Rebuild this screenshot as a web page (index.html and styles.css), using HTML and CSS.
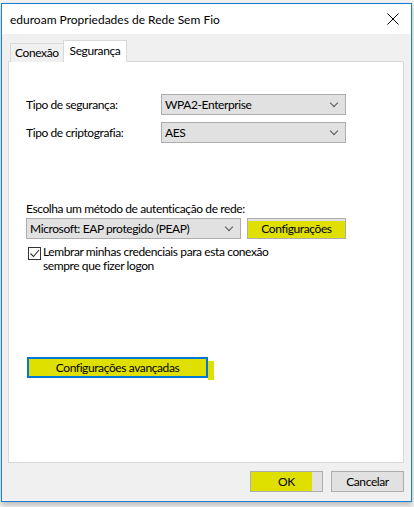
FILE: index.html
```html
<!DOCTYPE html>
<html lang="pt">
<head>
    <meta charset="UTF-8">
    <title>eduroam Propriedades de Rede Sem Fio</title>
    <link rel="stylesheet" href="styles.css">
</head>
<body>
    <div class="window">
        <div class="titlebar">
            <span class="title">eduroam Propriedades de Rede Sem Fio</span>
            <svg class="close" width="12" height="12" viewBox="0 0 12 12">
                <path d="M0.5 0.5 L11.5 11.5 M11.5 0.5 L0.5 11.5" stroke="#000" stroke-width="1" fill="none"/>
            </svg>
        </div>
        <div class="content">
            <div class="tabs">
                <div class="tab">Conexão</div>
                <div class="tab active">Segurança</div>
            </div>
            <div class="panel">
                <div class="row first">
                    <span class="label">Tipo de segurança:</span>
                    <div class="select wide">WPA2-Enterprise<span class="chev"></span></div>
                </div>
                <div class="row">
                    <span class="label">Tipo de criptografia:</span>
                    <div class="select wide">AES<span class="chev"></span></div>
                </div>

                <div class="caption">Escolha um método de autenticação de rede:</div>
                <div class="auth-row">
                    <div class="select eap">Microsoft: EAP protegido (PEAP)<span class="chev"></span></div>
                    <div class="button settings marked">Configurações</div>
                </div>
                <div class="check-row">
                    <span class="checkbox">
                        <svg width="11" height="11" viewBox="0 0 11 11">
                            <path d="M1.5 5.5 L4.5 8.5 L10 2" stroke="#333" stroke-width="1.1" fill="none"/>
                        </svg>
                    </span>
                    <span class="check-text">Lembrar minhas credenciais para esta conexão<br>sempre que fizer logon</span>
                </div>

                <div class="button advanced">Configurações avançadas</div>
            </div>
            <div class="footer">
                <div class="button ok">OK</div>
                <div class="button">Cancelar</div>
            </div>
        </div>
    </div>
</body>
</html>
```

FILE: styles.css
```css
body {
    margin: 0;
    background-color: #f3f3f3;
    font-family: "Segoe UI", Lato, "Noto Sans", sans-serif;
    font-size: 12px;
    letter-spacing: -0.4px;
    color: #000;
    width: 414px;
    height: 507px;
    overflow: hidden;
}
.window {
    margin: 3px 0 0 1px;
    width: 409px;
    height: 497px;
    border: 1px solid #1a7fd4;
    background-color: #f0f0f0;
    box-shadow: 0 3px 6px rgba(0, 0, 0, 0.25);
    display: flex;
    flex-direction: column;
}
.titlebar {
    height: 30px;
    background-color: #fff;
    display: flex;
    align-items: center;
    justify-content: space-between;
    padding: 0 10px 0 8px;
}
.title {
    font-size: 12px;
    letter-spacing: 0;
}
.close {
    margin-right: 2px;
}
.content {
    flex: 1;
    padding: 7px 7px 0 6px;
    display: flex;
    flex-direction: column;
}
.tabs {
    display: flex;
    align-items: flex-end;
    height: 21px;
    padding-left: 2px;
    position: relative;
    z-index: 1;
}
.tab {
    height: 18px;
    line-height: 18px;
    padding: 0 4px;
    border: 1px solid #d9d9d9;
    border-bottom: none;
    background-color: #f0f0f0;
}
.tab.active {
    height: 21px;
    line-height: 19px;
    background-color: #fff;
    padding: 0 6px;
    margin-left: -1px;
}
.panel {
    height: 400px;
    margin-top: -1px;
    border: 1px solid #d9d9d9;
    background-color: #fff;
    padding: 0 0 0 17px;
    display: flex;
    flex-direction: column;
    align-items: flex-start;
}
.row {
    display: flex;
    align-items: center;
    margin-top: 7px;
}
.row.first {
    margin-top: 32px;
}
.label {
    width: 135px;
}
.select {
    position: relative;
    box-sizing: border-box;
    height: 21px;
    line-height: 19px;
    border: 1px solid #adadad;
    background-color: #e1e1e1;
    padding-left: 3px;
}
.select.wide {
    width: 185px;
}
.select.eap {
    width: 215px;
}
.chev {
    position: absolute;
    right: 8px;
    top: 5px;
    width: 5px;
    height: 5px;
    border-right: 1px solid #555;
    border-bottom: 1px solid #555;
    transform: rotate(45deg);
}
.caption {
    margin-top: 58px;
    line-height: 15px;
}
.auth-row {
    display: flex;
    margin-top: 2px;
}
.button {
    box-sizing: border-box;
    height: 21px;
    line-height: 19px;
    width: 73px;
    text-align: center;
    border: 1px solid #adadad;
    background-color: #e1e1e1;
}
.settings {
    width: 99px;
    margin-left: 6px;
}
.marked {
    background: linear-gradient(to bottom, #e1e1e1 0, #e1e1e1 2px, #e0e000 2px);
}
.check-row {
    display: flex;
    align-items: flex-start;
    margin-top: 8px;
    margin-left: 2px;
}
.checkbox {
    box-sizing: border-box;
    width: 13px;
    height: 13px;
    border: 1px solid #333;
    background-color: #fff;
    display: flex;
    align-items: center;
    justify-content: center;
    margin-right: 2px;
}
.check-text {
    line-height: 14px;
    margin-top: -2px;
}
.advanced {
    position: relative;
    width: 181px;
    margin-top: 84px;
    margin-left: 1px;
    border: 2px solid #0078d7;
    line-height: 17px;
    background-color: #e0e000;
}
.advanced::after {
    content: "";
    position: absolute;
    right: -8px;
    top: 2px;
    width: 6px;
    height: 19px;
    background-color: #e0e000;
}
.footer {
    display: flex;
    justify-content: flex-end;
    gap: 8px;
    margin-top: 8px;
}
.ok {
    background: linear-gradient(to right, #e0e000 0, #e0e000 86%, #e1e1e1 86%);
}
```
